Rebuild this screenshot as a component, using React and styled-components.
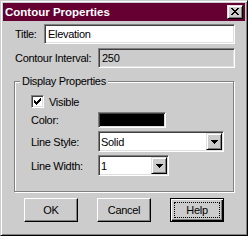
import React from 'react';
import styled, { createGlobalStyle, css } from 'styled-components';

const GlobalStyle = createGlobalStyle`
  html, body {
    margin: 0;
    padding: 0;
    background: #cccccc;
  }
  body {
    font-family: "Liberation Sans", Arial, sans-serif;
    font-size: 11px;
    letter-spacing: -0.3px;
    color: #000;
  }
`;

const raised = css`
  border: 1px solid;
  border-color: #dfdfdf #000000 #000000 #dfdfdf;
  box-shadow: inset 1px 1px 0 #ffffff, inset -1px -1px 0 #808080;
`;

const sunken = css`
  border: 1px solid;
  border-color: #808080 #ffffff #ffffff #808080;
  box-shadow: inset 1px 1px 0 #404040, inset -1px -1px 0 #dfdfdf;
`;

const Window = styled.div`
  width: 248px;
  height: 236px;
  box-sizing: border-box;
  background: #cccccc;
  border: 1px solid;
  border-color: #cccccc #000000 #000000 #cccccc;
  box-shadow: inset 1px 1px 0 #ffffff, inset -1px -1px 0 #808080;
  padding: 2px;
  display: flex;
  flex-direction: column;
`;

const TitleBar = styled.div`
  height: 18px;
  flex: none;
  background: #660033;
  display: flex;
  align-items: center;
  justify-content: space-between;
  padding: 0 2px;
  color: #ffffff;
  font-weight: bold;
  font-size: 11.5px;
  letter-spacing: 0;
`;

const CloseButton = styled.div`
  width: 16px;
  height: 14px;
  box-sizing: border-box;
  background: #cccccc;
  ${raised};
  display: flex;
  justify-content: center;
  align-items: flex-start;
  padding-top: 2px;

  svg {
    display: block;
  }
`;

const Body = styled.div`
  flex: 1;
  display: flex;
  flex-direction: column;
  padding: 3px 10px 0 11px;
`;

const Row = styled.div`
  display: flex;
  align-items: center;
  padding-left: 1px;
  margin-top: ${p => p.$gap || 0}px;
`;

const Label = styled.label`
  flex: none;
  width: ${p => p.$w}px;
`;

const TextBox = styled.input`
  flex: 1;
  min-width: 0;
  height: 20px;
  box-sizing: border-box;
  margin: 0;
  padding: 0 3px;
  font: inherit;
  letter-spacing: inherit;
  color: #000;
  outline: none;
  ${sunken};
  background: ${p => (p.readOnly ? '#cccccc' : '#ffffff')};
`;

const Group = styled.div`
  margin: 13px 1px 0 0;
  border: 1px solid #808080;
  box-shadow: 1px 1px 0 #ffffff, inset 1px 1px 0 #ffffff;
  padding: 0 0 15px 16px;
  display: flex;
  flex-direction: column;
`;

const Legend = styled.div`
  align-self: flex-start;
  margin: -7px 0 0 -11px;
  padding: 0 2px;
  line-height: 13px;
  background: #cccccc;
`;

const GroupRow = styled.div`
  display: flex;
  align-items: center;
  margin-top: ${p => p.$gap}px;
`;

const CheckBox = styled.span`
  width: 13px;
  height: 13px;
  box-sizing: border-box;
  flex: none;
  ${sunken};
  background: #ffffff;
  display: flex;
  padding: 2px 0 0 2px;
  margin-right: 5px;

  svg {
    display: block;
  }
`;

const Swatch = styled.div`
  width: 68px;
  height: 16px;
  box-sizing: border-box;
  ${sunken};
  background: ${p => p.$color};
`;

const Combo = styled.div`
  width: ${p => p.$w}px;
  height: 21px;
  box-sizing: border-box;
  ${sunken};
  background: #ffffff;
  padding: 1px;
  display: flex;
`;

const ComboText = styled.span`
  flex: 1;
  display: flex;
  align-items: center;
  padding-left: 1px;
`;

const DropButton = styled.span`
  width: 16px;
  flex: none;
  box-sizing: border-box;
  background: #cccccc;
  ${raised};
  display: flex;
  align-items: center;
  justify-content: center;

  svg {
    display: block;
  }
`;

const ButtonRow = styled.div`
  display: flex;
  justify-content: center;
  gap: 19px;
  margin: 6px 1px 0 0;
`;

const Button = styled.button`
  position: relative;
  width: 54px;
  height: 24px;
  box-sizing: border-box;
  margin: 0;
  padding: 0;
  font: inherit;
  letter-spacing: inherit;
  color: #000;
  background: #cccccc;
  border: 1px solid;
  border-color: #ffffff #000000 #000000 #ffffff;
  box-shadow: inset -1px -1px 0 #808080;

  ${p =>
    p.$default &&
    css`
      border-color: #000000;
      box-shadow: inset 1px 1px 0 #ffffff, inset -1px -1px 0 #000000,
        inset -2px -2px 0 #808080;

      &::after {
        content: '';
        position: absolute;
        inset: 3px;
        border: 1px dotted #000000;
      }
    `}
`;

const CloseGlyph = () => (
  <svg width="8" height="7" viewBox="0 0 8 7" shapeRendering="crispEdges">
    <path
      fill="#000"
      d="M0 0h2v1h-2zM6 0h2v1h-2zM1 1h2v1h-2zM5 1h2v1h-2zM2 2h4v1h-4zM3 3h2v1h-2zM2 4h4v1h-4zM1 5h2v1h-2zM5 5h2v1h-2zM0 6h2v1h-2zM6 6h2v1h-2z"
    />
  </svg>
);

const CheckGlyph = () => (
  <svg width="7" height="7" viewBox="0 0 7 7" shapeRendering="crispEdges">
    <path
      fill="#000"
      d="M6 0h1v1h-1zM5 1h2v1h-2zM0 2h1v1h-1zM4 2h3v1h-3zM0 3h2v1h-2zM3 3h3v1h-3zM0 4h5v1h-5zM1 5h3v1h-3zM2 6h1v1h-1z"
    />
  </svg>
);

const ArrowGlyph = () => (
  <svg width="7" height="4" viewBox="0 0 7 4" shapeRendering="crispEdges">
    <path fill="#000" d="M0 0h7v1h-7zM1 1h5v1h-5zM2 2h3v1h-3zM3 3h1v1h-1z" />
  </svg>
);

const Select = ({ width, value }) => (
  <Combo $w={width}>
    <ComboText>{value}</ComboText>
    <DropButton>
      <ArrowGlyph />
    </DropButton>
  </Combo>
);

export default function App() {
  return (
    <>
      <GlobalStyle />
      <Window>
        <TitleBar>
          <span>Contour Properties</span>
          <CloseButton aria-label="Close">
            <CloseGlyph />
          </CloseButton>
        </TitleBar>
        <Body>
          <Row>
            <Label $w={29}>Title:</Label>
            <TextBox defaultValue="Elevation" />
          </Row>
          <Row $gap={4}>
            <Label $w={83}>Contour Interval:</Label>
            <TextBox readOnly value="250" />
          </Row>
          <Group>
            <Legend>Display Properties</Legend>
            <GroupRow $gap={7}>
              <CheckBox>
                <CheckGlyph />
              </CheckBox>
              <span>Visible</span>
            </GroupRow>
            <GroupRow $gap={4}>
              <Label $w={67}>Color:</Label>
              <Swatch $color="#000000" />
            </GroupRow>
            <GroupRow $gap={3}>
              <Label $w={67}>Line Style:</Label>
              <Select width={126} value="Solid" />
            </GroupRow>
            <GroupRow $gap={3}>
              <Label $w={67}>Line Width:</Label>
              <Select width={71} value="1" />
            </GroupRow>
          </Group>
          <ButtonRow>
            <Button>OK</Button>
            <Button>Cancel</Button>
            <Button $default>Help</Button>
          </ButtonRow>
        </Body>
      </Window>
    </>
  );
}
